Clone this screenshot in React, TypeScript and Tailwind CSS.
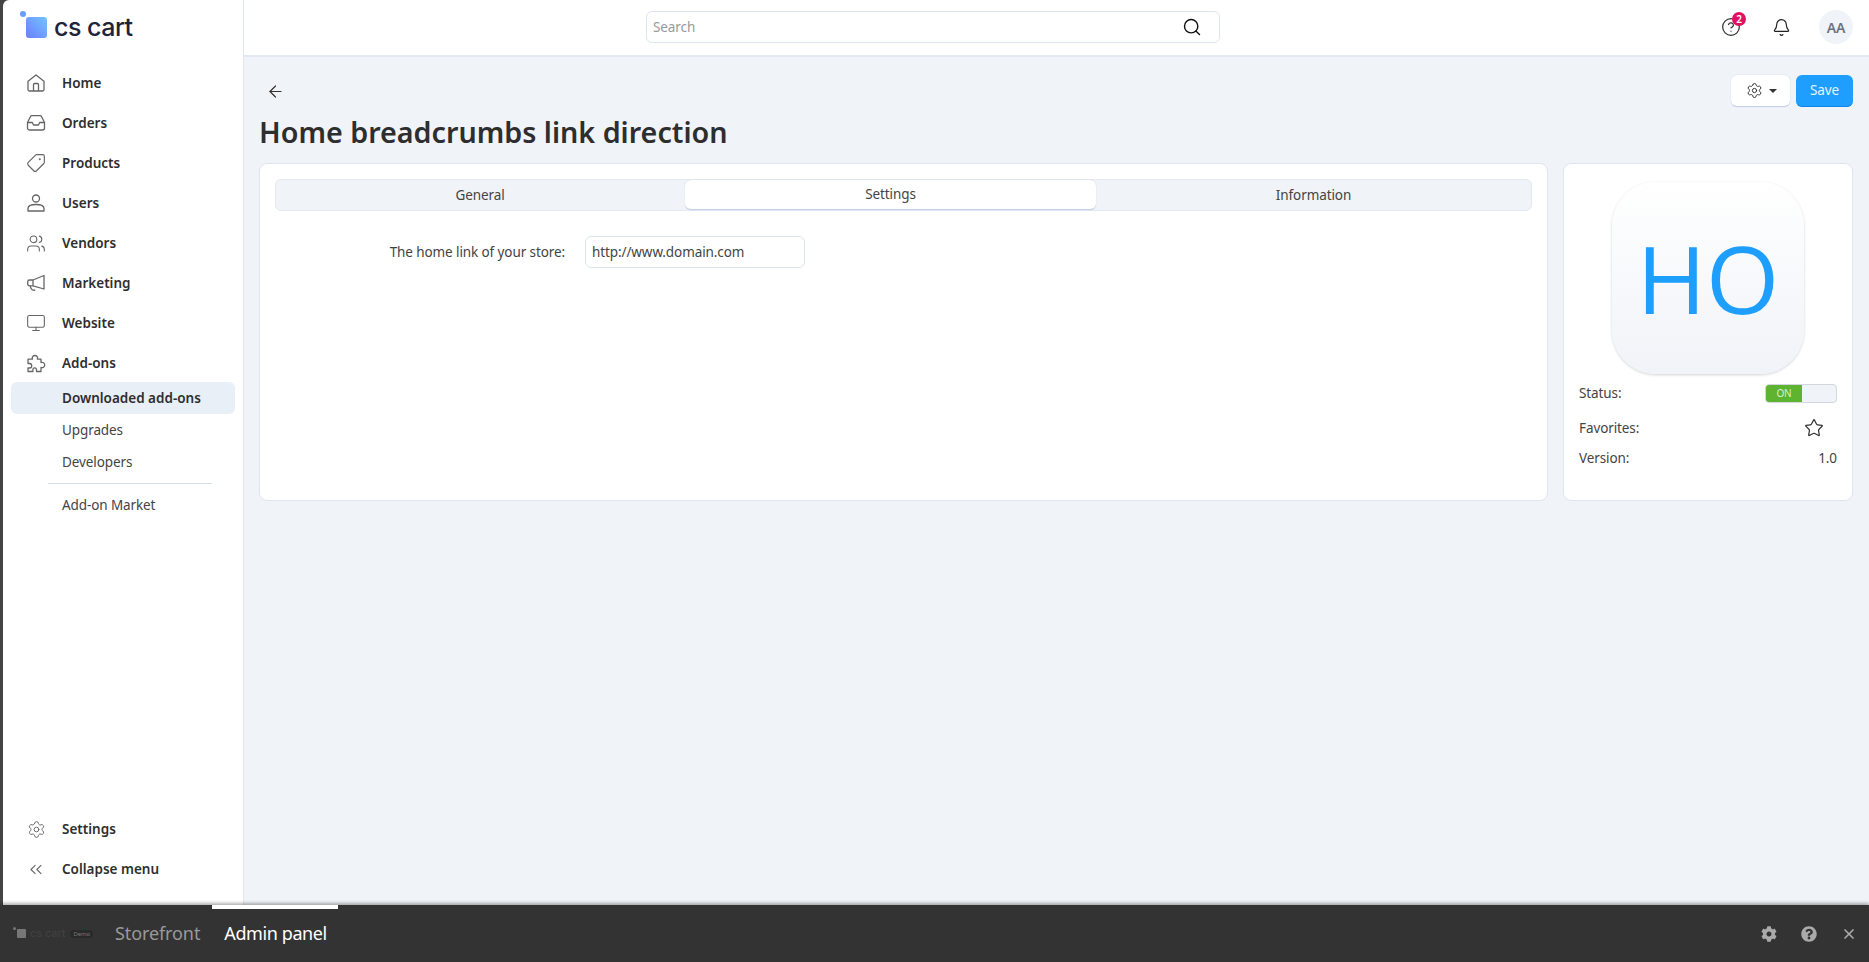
import { ArrowLeft, Bell, ChevronsLeft, CircleHelp, Monitor, Search, Settings, Star, Tag, Users, X } from "lucide-react";
import { FaCog, FaQuestionCircle } from "react-icons/fa";

function HomeIcon() {
  return (
    <svg width="20" height="20" viewBox="0 0 20 20" fill="none" stroke="currentColor" strokeWidth="1.3" strokeLinejoin="round">
      <path d="M2 8.200 10 2l8 6.200V16.500a1.500 1.500 0 0 1-1.500 1.500h-13A1.500 1.500 0 0 1 2 16.500z" />
      <path d="M7.500 18v-6.500a1 1 0 0 1 1-1h3a1 1 0 0 1 1 1V18" />
    </svg>
  );
}

function OrdersIcon() {
  return (
    <svg width="20" height="20" viewBox="0 0 20 20" fill="none" stroke="currentColor" strokeWidth="1.3" strokeLinejoin="round">
      <path d="M1.500 9.500 4.500 3.500a1.500 1.500 0 0 1 1.300-.8h8.400a1.500 1.500 0 0 1 1.300.8l3 6v5.500a2 2 0 0 1-2 2h-13a2 2 0 0 1-2-2z" />
      <path d="M1.500 9.500h4.800l1.200 2.500h5l1.200-2.500h4.800" />
    </svg>
  );
}

function UserIcon() {
  return (
    <svg width="20" height="20" viewBox="0 0 20 20" fill="none" stroke="currentColor" strokeWidth="1.3" strokeLinejoin="round">
      <circle cx="10" cy="5.500" r="3.500" />
      <path d="M2 15.500c0-2.500 3-4 8-4s8 1.500 8 4V18H2z" />
    </svg>
  );
}

function MegaphoneIcon() {
  return (
    <svg width="20" height="20" viewBox="0 0 20 20" fill="none" stroke="currentColor" strokeWidth="1.3" strokeLinejoin="round">
      <path d="M18 2.500v13.500L7 12.800H3.500A1.800 1.800 0 0 1 1.700 11V8.800A1.800 1.800 0 0 1 3.500 7H7z" />
      <path d="M7 7v5.800" />
      <path d="M4.300 12.800c.2 2 1 3.700 2.200 4.200.8.300 1.800.3 2.700.1" />
    </svg>
  );
}

function PuzzleIcon() {
  return (
    <svg width="20" height="20" viewBox="0 0 20 20" fill="none" stroke="currentColor" strokeWidth="1.3" strokeLinejoin="round">
      <path d="M2 6.200H6.400a2.700 2.700 0 1 1 5 0H15V9.500a2.700 2.700 0 1 1 0 5V18.500H10.500v-1.800a1.800 1.800 0 0 0-3.600 0v1.800H2V15h1.500a2 2 0 0 0 0-4.500H2z" />
    </svg>
  );
}

const mainNav = [
  { label: "Home", icon: <HomeIcon /> },
  { label: "Orders", icon: <OrdersIcon /> },
  { label: "Products", icon: <Tag size={20} strokeWidth={1.4} className="rotate-90" /> },
  { label: "Users", icon: <UserIcon /> },
  { label: "Vendors", icon: <Users size={21} strokeWidth={1.3} /> },
  { label: "Marketing", icon: <MegaphoneIcon /> },
  { label: "Website", icon: <Monitor size={20} strokeWidth={1.3} /> },
  { label: "Add-ons", icon: <PuzzleIcon /> },
];

function NavRow({ label, icon }: { label: string; icon: React.ReactNode }) {
  return (
    <div className="flex h-10 items-center pl-[23px]">
      <span className="flex w-[20px] justify-center text-[#666]">{icon}</span>
      <span className="ml-[16px] text-[13.5px] font-semibold tracking-normal text-[#2e2e2e]">{label}</span>
    </div>
  );
}

function Sidebar() {
  return (
    <aside className="flex w-[241px] shrink-0 flex-col rounded-tl-md border-r border-[#dfe6f2] bg-white">
      <div className="relative flex h-[55px] items-center pl-[23px]">
        <span className="absolute left-[17px] top-[11px] size-[6px] rounded-full bg-[#6d9cff]" />
        <span className="size-[21px] rounded-[3px] bg-gradient-to-tr from-[#6a7dff] to-[#74c2ff]" />
        <span className="ml-[7px] font-['Inter',sans-serif] text-[25px] font-medium leading-none tracking-[-0.5px] text-[#1d2338]">cs cart</span>
      </div>
      <nav className="mb-[-1px] mt-[8px] flex flex-col">
        {mainNav.map((item) => (
          <NavRow key={item.label} {...item} />
        ))}
      </nav>
      <div className="mx-[8px] flex h-[32px] items-center rounded-md bg-[#e9eff7] pl-[51px] text-[13.5px] font-semibold tracking-normal text-[#2e2e2e]">Downloaded add-ons</div>
      <div className="flex h-[32px] items-center pl-[59px] text-[13.5px] text-[#444]">Upgrades</div>
      <div className="flex h-[32px] items-center pl-[59px] text-[13.5px] text-[#444]">Developers</div>
      <div className="ml-[45px] mr-[31px] mt-[5px] border-t border-[#d5deec]" />
      <div className="mt-[5px] flex h-[32px] items-center pl-[59px] text-[13.5px] text-[#444]">Add-on Market</div>
      <div className="mt-auto pb-[16px]">
        <NavRow label="Settings" icon={<Settings size={19} strokeWidth={1.2} />} />
        <NavRow label="Collapse menu" icon={<ChevronsLeft size={21} strokeWidth={1.3} />} />
      </div>
    </aside>
  );
}

function TopBar() {
  return (
    <header className="flex h-[57px] shrink-0 items-center border-b-2 border-[#e3e9f3] bg-white">
      <div className="mb-[1px] ml-[402px] flex h-[32px] w-[574px] items-center rounded-md border border-[#dde4f0] pl-[6px] pr-[17px]">
        <span className="flex-1 text-[13.5px] text-[#9a9a9a]">Search</span>
        <Search size={20} strokeWidth={1.7} className="text-[#111]" />
      </div>
      <div className="mb-[1px] ml-auto flex items-center pr-[16px]">
        <div className="relative text-[#333]">
          <CircleHelp size={20} strokeWidth={1.5} />
          <span className="absolute -right-[5px] -top-[5px] flex size-[14px] items-center justify-center rounded-full bg-[#e0115f] text-[10px] font-semibold leading-none text-white">2</span>
        </div>
        <Bell size={19} strokeWidth={1.5} className="ml-[31px] text-[#222]" />
        <span className="ml-[28px] flex size-[34px] items-center justify-center rounded-full bg-[#f0f3f8] text-[14px] font-semibold text-[#6b7280]">AA</span>
      </div>
    </header>
  );
}

function TabStrip() {
  return (
    <div className="grid h-[32px] grid-cols-[410px_410px_1fr] rounded-md border border-[#e4e9f2] bg-[#f0f3f8] text-[13.5px] text-[#444]">
      <div className="flex items-center justify-center pr-[2px]">General</div>
      <div className="-ml-[1px] flex items-center justify-center rounded-md border-b border-[#c4d0e6] bg-white shadow-[0_0_1px_#b9c6de]">Settings</div>
      <div className="flex items-center justify-center">Information</div>
    </div>
  );
}

function AddonCard() {
  return (
    <div className="flex h-[338px] w-[290px] shrink-0 flex-col rounded-lg border border-[#dfe5f1] bg-white px-[15px] text-[13.5px] text-[#444]">
      <div className="mx-auto mt-[18px] flex size-[192px] items-center justify-center rounded-[44px] bg-gradient-to-b from-white to-[#f0f3f8] font-['Open_Sans',sans-serif] text-[94px] font-normal tracking-normal text-[#1e9fff] shadow-[0_1px_3px_rgba(0,0,0,0.18)]">HO</div>
      <div className="mt-[10px] flex h-[19px] items-center justify-between">
        <span>Status:</span>
        <div className="flex h-[19px] w-[72px] overflow-hidden rounded border border-[#d3d7df] bg-[#f0f3f8]">
          <span className="flex w-[36px] items-center justify-center bg-[#5eb330] text-[10px] text-[#d8f0c8]">ON</span>
        </div>
      </div>
      <div className="mt-[13px] flex h-[24px] items-center justify-between">
        <span>Favorites:</span>
        <Star size={20} strokeWidth={1.5} className="mr-[13px] text-[#333]" />
      </div>
      <div className="mt-[8px] flex h-[20px] items-center justify-between">
        <span>Version:</span>
        <span>1.0</span>
      </div>
    </div>
  );
}

function Page() {
  return (
    <main className="flex min-h-0 flex-1 flex-col bg-[#f0f3f8] pl-[15px] pr-[16px]">
      <div className="flex h-[50px] items-end justify-between">
        <ArrowLeft size={19} strokeWidth={1.5} className="mb-[6px] ml-[7px] text-[#333]" />
        <div className="flex gap-[6px]">
          <button className="flex h-[32px] w-[59px] items-center justify-center gap-[6px] rounded-md border-b border-[#c4d0e6] bg-white pl-[2px] text-[#333] shadow-[0_0_1px_#b9c6de]">
            <Settings size={17} strokeWidth={1.4} />
            <span className="border-x-[4px] border-t-[4px] border-x-transparent border-t-[#333]" />
          </button>
          <button className="h-[32px] w-[57px] rounded-md border-b border-[#0f83e6] bg-[#1e9fff] text-[13.5px] text-[#e8f5ff]">Save</button>
        </div>
      </div>
      <h1 className="mt-[5px] text-[28.7px] font-semibold leading-[40px] tracking-normal text-[#2e2e2e]">Home breadcrumbs link direction</h1>
      <div className="mt-[11px] flex gap-[15px]">
        <div className="h-[338px] flex-1 rounded-lg border border-[#dfe5f1] bg-white px-[15px] pt-[15px]">
          <TabStrip />
          <div className="mt-[25px] flex items-center text-[13.5px] text-[#444]">
            <label className="w-[290px] text-right">The home link of your store:</label>
            <div className="ml-[20px] flex h-[32px] w-[220px] items-center rounded-md border border-[#dde4f0] pl-[6px]">http://www.domain.com</div>
          </div>
        </div>
        <AddonCard />
      </div>
    </main>
  );
}

function BottomBar() {
  return (
    <footer className="relative flex h-[57px] shrink-0 items-center bg-[#333] pr-[12px] shadow-[0_-2px_3px_rgba(0,0,0,0.3)]">
      <span className="absolute left-[212px] top-0 h-[4px] w-[126px] bg-white" />
      <div className="relative flex w-[115px] items-center pl-[17px]">
        <span className="absolute left-[13px] top-[2px] size-[3px] rounded-full bg-[#777]" />
        <span className="size-[9px] rounded-[1px] bg-[#777]" />
        <span className="ml-[4px] font-['Inter',sans-serif] text-[11px] font-medium text-[#404040]">cs cart</span>
        <span className="ml-[5px] rounded-sm bg-[#2a2a2a] px-[3px] py-[1px] text-[6px] leading-none text-[#777]">Demo</span>
      </div>
      <span className="text-[18px] tracking-[-0.1px] text-[#999]">Storefront</span>
      <span className="ml-[24px] text-[18px] tracking-[-0.4px] text-white">Admin panel</span>
      <div className="ml-auto flex items-center gap-[24px] text-[#aaa]">
        <FaCog size={16} />
        <FaQuestionCircle size={16} />
        <X size={16} strokeWidth={2.5} />
      </div>
    </footer>
  );
}

export default function App() {
  return (
    <div className="flex h-[962px] w-[1869px] flex-col overflow-hidden bg-[#444] font-['Noto_Sans',sans-serif] tracking-[-0.1px]">
      <div className="flex min-h-0 flex-1 pl-[3px]">
        <Sidebar />
        <div className="flex min-w-0 flex-1 flex-col">
          <TopBar />
          <Page />
        </div>
      </div>
      <BottomBar />
    </div>
  );
}
